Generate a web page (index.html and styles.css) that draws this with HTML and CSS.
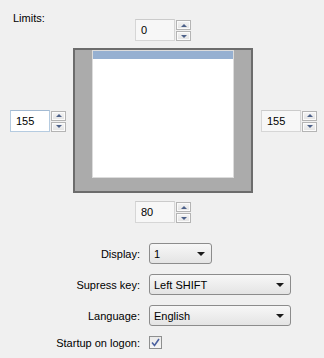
FILE: index.html
```html
<!DOCTYPE html>
<html lang="en">
<head>
    <meta charset="UTF-8">
    <title>Settings</title>
    <link rel="stylesheet" href="styles.css">
</head>
<body>
    <div class="panel">
        <div class="limits">
            <div class="limits-label">Limits:</div>

            <div class="spin spin-top">
                <div class="spin-box">0</div>
                <div class="spin-btns">
                    <span class="spin-btn"><i class="arrow-up"></i></span>
                    <span class="spin-btn"><i class="arrow-down"></i></span>
                </div>
            </div>

            <div class="spin spin-left">
                <div class="spin-box focused">155</div>
                <div class="spin-btns">
                    <span class="spin-btn"><i class="arrow-up"></i></span>
                    <span class="spin-btn"><i class="arrow-down"></i></span>
                </div>
            </div>

            <div class="monitor">
                <div class="screen">
                    <div class="taskbar"></div>
                </div>
            </div>

            <div class="spin spin-right">
                <div class="spin-box">155</div>
                <div class="spin-btns">
                    <span class="spin-btn"><i class="arrow-up"></i></span>
                    <span class="spin-btn"><i class="arrow-down"></i></span>
                </div>
            </div>

            <div class="spin spin-bottom">
                <div class="spin-box">80</div>
                <div class="spin-btns">
                    <span class="spin-btn"><i class="arrow-up"></i></span>
                    <span class="spin-btn"><i class="arrow-down"></i></span>
                </div>
            </div>
        </div>

        <div class="options">
            <label class="opt-label">Display:</label>
            <div class="combo combo-short"><span>1</span><i class="combo-arrow"></i></div>

            <label class="opt-label">Supress key:</label>
            <div class="combo"><span>Left SHIFT</span><i class="combo-arrow"></i></div>

            <label class="opt-label">Language:</label>
            <div class="combo"><span>English</span><i class="combo-arrow"></i></div>

            <label class="opt-label">Startup on logon:</label>
            <div class="check">
                <svg width="9" height="9" viewBox="0 0 9 9">
                    <path d="M1 4.5 L3.5 7.5 L8 1" fill="none" stroke="#4b61a0" stroke-width="1.6"/>
                </svg>
            </div>
        </div>
    </div>
</body>
</html>
```

FILE: styles.css
```css
body {
    margin: 0;
    background: #f0f0f0;
    font-family: 'Liberation Sans', Arial, sans-serif;
    font-size: 11px;
    color: #000000;
}
.panel {
    width: 324px;
    height: 358px;
    overflow: hidden;
}

/* Limits area */
.limits {
    display: grid;
    grid-template-columns: 73px 180px 1fr;
    grid-template-rows: 29px 145px 23px;
    row-gap: 7px;
    margin-top: 12px;
}
.limits-label {
    grid-row: 1;
    grid-column: 1;
    padding-left: 13px;
    line-height: 13px;
}
.spin {
    display: flex;
    gap: 1px;
}
.spin-top {
    grid-row: 1;
    grid-column: 2;
    justify-self: center;
    align-self: end;
}
.spin-left {
    grid-row: 2;
    grid-column: 1;
    justify-self: end;
    align-self: center;
    margin-right: 7px;
}
.spin-right {
    grid-row: 2;
    grid-column: 3;
    justify-self: start;
    align-self: center;
    margin-left: 8px;
}
.spin-bottom {
    grid-row: 3;
    grid-column: 2;
    justify-self: center;
    align-self: start;
    margin-top: 1px;
}
.spin-box {
    box-sizing: border-box;
    width: 40px;
    height: 22px;
    padding-left: 5px;
    line-height: 20px;
    background: #f7f7f7;
    border: 1px solid #d6d6d6;
    border-top-color: #cbcbcb;
}
.spin-box.focused {
    background: #ffffff;
    border-color: #b5cbe0;
    border-top-color: #a3bad2;
}
.spin-btns {
    display: flex;
    flex-direction: column;
    gap: 1px;
    padding-top: 1px;
}
.spin-btn {
    box-sizing: border-box;
    width: 15px;
    height: 10px;
    display: flex;
    align-items: center;
    justify-content: center;
    border: 1px solid #b4b4b4;
    background: linear-gradient(#f4f4f4, #e3e3e3);
    box-shadow: inset 0 0 0 1px #fbfbfb;
}
.arrow-up,
.arrow-down {
    width: 0;
    height: 0;
    border-left: 3px solid transparent;
    border-right: 3px solid transparent;
}
.arrow-up {
    border-bottom: 3px solid #4d6189;
}
.arrow-down {
    border-top: 3px solid #4d6189;
}

/* Monitor preview */
.monitor {
    grid-row: 2;
    grid-column: 2;
    box-sizing: border-box;
    border: 2px solid #6c6c6c;
    background: #ababab;
    display: flex;
    justify-content: center;
}
.screen {
    box-sizing: border-box;
    width: 142px;
    height: 128px;
    margin-left: -1px;
    background: #ffffff;
    border: 1px solid #dcdcdc;
}
.taskbar {
    height: 8px;
    background: #96b0d1;
}

/* Options */
.options {
    display: grid;
    grid-template-columns: 140px auto;
    column-gap: 9px;
    row-gap: 10px;
    margin-top: 20px;
}
.opt-label {
    justify-self: end;
    align-self: center;
}
.combo {
    box-sizing: border-box;
    width: 142px;
    height: 21px;
    display: flex;
    align-items: center;
    justify-content: space-between;
    padding: 0 6px 0 4px;
    border: 1px solid #8c8c8c;
    border-radius: 3px;
    background: linear-gradient(#f7f7f7, #e4e4e4);
}
.combo-short {
    width: 63px;
}
.combo-arrow {
    width: 0;
    height: 0;
    border-left: 4px solid transparent;
    border-right: 4px solid transparent;
    border-top: 4px solid #1a1a1a;
}
.check {
    box-sizing: border-box;
    width: 13px;
    height: 13px;
    align-self: center;
    display: flex;
    align-items: center;
    justify-content: center;
    border: 1px solid #8e8f8f;
    background: linear-gradient(#eaeaea, #f6f6f6);
}
```
